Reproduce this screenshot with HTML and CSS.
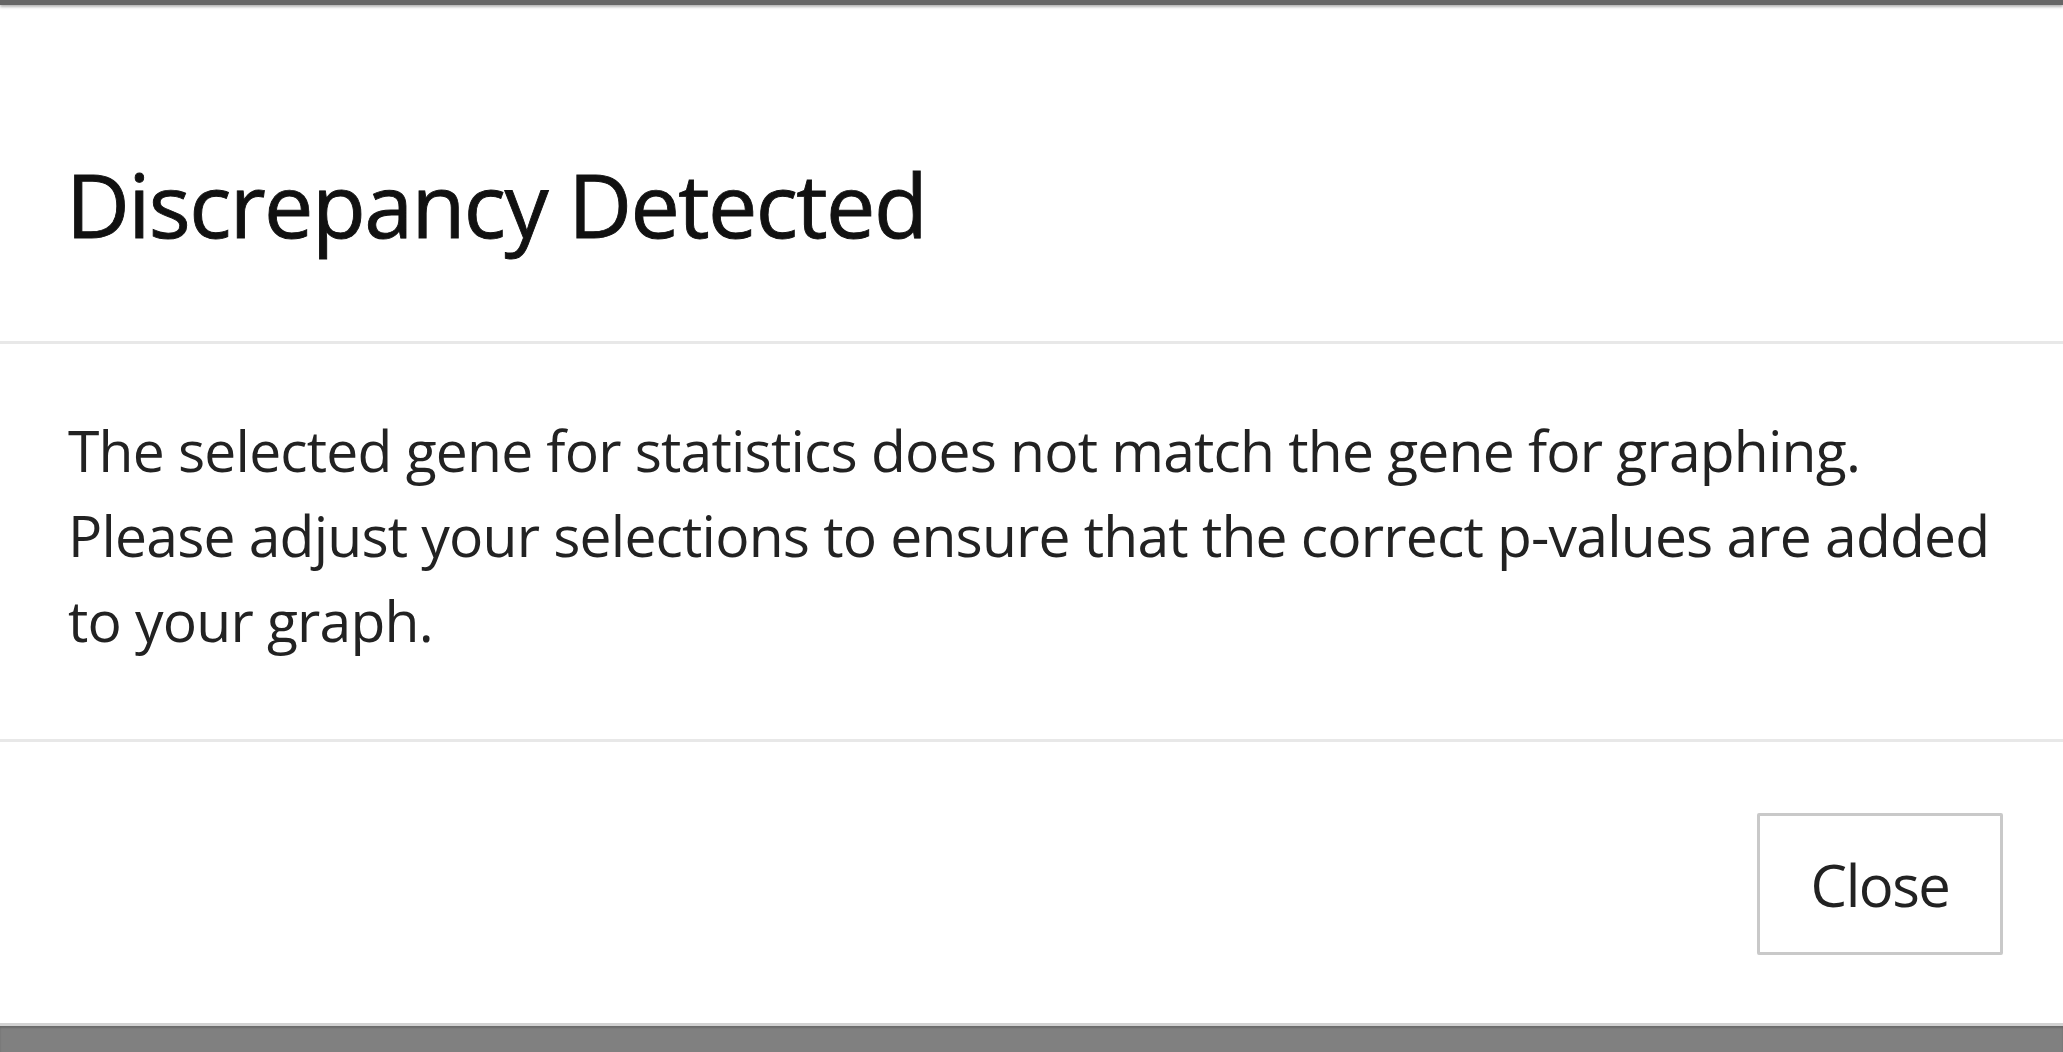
FILE: index.html
```html
<!DOCTYPE html>
<html lang="en">
<head>
<meta charset="utf-8">
<title>Discrepancy Detected</title>
<link rel="stylesheet" href="styles.css">
</head>
<body>
<div class="page">
  <div class="topbar"></div>
  <div class="modal">
    <div class="modal-header">
      <h4 class="modal-title">Discrepancy Detected</h4>
    </div>
    <div class="modal-body">
      <p>The selected gene for statistics does not match the gene for graphing. Please adjust your selections to ensure that the correct p-values are added to your graph.</p>
    </div>
    <div class="modal-footer">
      <button class="btn" type="button">Close</button>
    </div>
  </div>
  <div class="bottombar"></div>
</div>
</body>
</html>
```
FILE: styles.css
```css
html, body {
  margin: 0;
  padding: 0;
  background: #ffffff;
  overflow: hidden;
}

.page {
  height: 1052px;
  display: flex;
  flex-direction: column;
  font-family: "Open Sans", "Noto Sans", sans-serif;
}

.topbar {
  height: 5px;
  background: #666666;
  box-shadow: 0 2px 3px rgba(0, 0, 0, 0.3);
  position: relative;
  z-index: 1;
}

.modal {
  flex: 1;
  display: flex;
  flex-direction: column;
  background: #fff;
}

.modal-header {
  padding: 151px 60px 88px 66px;
  border-bottom: 3px solid #e8e8e8;
}

.modal-title {
  margin: 0;
  font-size: 88px;
  line-height: 97px;
  font-weight: 500;
  letter-spacing: -1.6px;
  color: #111111;
  -webkit-text-stroke: 0.9px #111111;
}

.modal-body {
  padding: 64px 60px 76px 68px;
  border-bottom: 3px solid #e8e8e8;
}

.modal-body p {
  margin: 0;
  font-size: 57px;
  line-height: 85px;
  letter-spacing: -0.8px;
  color: #222222;
}

.modal-footer {
  padding: 71px 60px 68px 60px;
  display: flex;
  justify-content: flex-end;
}

.btn {
  width: 246px;
  height: 142px;
  background: #fff;
  border: 3px solid #c9c9c9;
  border-radius: 2px;
  font-family: "Open Sans", "Noto Sans", sans-serif;
  font-size: 58px;
  letter-spacing: -1.5px;
  color: #222222;
  padding: 0;
}

.bottombar {
  height: 26px;
  background: #808080;
  border-top: 3px solid #d2d2d2;
  box-shadow: inset 0 2px 2px rgba(0, 0, 0, 0.18);
}
```
